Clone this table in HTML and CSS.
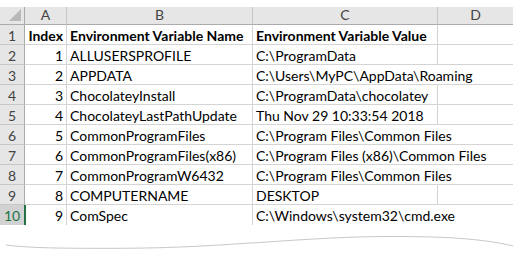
FILE: index.html
```html
<!DOCTYPE html>
<html>
<head>
<meta charset="utf-8">
<link rel="stylesheet" href="styles.css">
</head>
<body>
<div class="sheet">
  <div class="hdr corner"><span class="tri"></span></div>
  <div class="hdr col">A</div>
  <div class="hdr col">B</div>
  <div class="hdr col">C</div>
  <div class="hdr col last">D</div>

  <div class="rh">1</div>
  <div class="c num b">Index</div>
  <div class="c b">Environment Variable Name</div>
  <div class="c v b">Environment Variable Value</div>
  <div class="c d"></div>

  <div class="rh">2</div>
  <div class="c num">1</div>
  <div class="c">ALLUSERSPROFILE</div>
  <div class="c v">C:\ProgramData</div>
  <div class="c d"></div>

  <div class="rh">3</div>
  <div class="c num">2</div>
  <div class="c">APPDATA</div>
  <div class="c v over">C:\Users\MyPC\AppData\Roaming</div>
  <div class="c d"></div>

  <div class="rh">4</div>
  <div class="c num">3</div>
  <div class="c">ChocolateyInstall</div>
  <div class="c v">C:\ProgramData\chocolatey</div>
  <div class="c d"></div>

  <div class="rh">5</div>
  <div class="c num">4</div>
  <div class="c">ChocolateyLastPathUpdate</div>
  <div class="c v">Thu Nov 29 10:33:54 2018</div>
  <div class="c d"></div>

  <div class="rh">6</div>
  <div class="c num">5</div>
  <div class="c">CommonProgramFiles</div>
  <div class="c v over">C:\Program Files\Common Files</div>
  <div class="c d"></div>

  <div class="rh">7</div>
  <div class="c num">6</div>
  <div class="c">CommonProgramFiles(x86)</div>
  <div class="c v over">C:\Program Files (x86)\Common Files</div>
  <div class="c d"></div>

  <div class="rh">8</div>
  <div class="c num">7</div>
  <div class="c">CommonProgramW6432</div>
  <div class="c v over">C:\Program Files\Common Files</div>
  <div class="c d"></div>

  <div class="rh">9</div>
  <div class="c num">8</div>
  <div class="c">COMPUTERNAME</div>
  <div class="c v">DESKTOP</div>
  <div class="c d"></div>

  <div class="rh sel lastrow">10</div>
  <div class="c num lastrow">9</div>
  <div class="c lastrow">ComSpec</div>
  <div class="c v over lastrow">C:\Windows\system32\cmd.exe</div>
  <div class="c d lastrow"></div>
</div>
<svg class="tear" width="513" height="33" viewBox="0 0 513 33">
  <path d="M6 20 C 30 23, 60 23.5, 120 23.3 C 190 23, 230 19, 260 17.5 C 310 14, 350 11.5, 390 11.5 C 440 11.5, 480 13, 513 21" fill="none" stroke="#c8c8c8" stroke-width="1"/>
</svg>
</body>
</html>
```
FILE: styles.css
```css
html, body {
  margin: 0;
  padding: 0;
  background: #ffffff;
}
body {
  width: 513px;
  height: 258px;
  overflow: hidden;
  font-family: Lato, "Liberation Sans", sans-serif;
  font-size: 14px;
  color: #000;
}
.sheet {
  margin-top: 7px;
  display: grid;
  grid-template-columns: 25px 42px 186px 185px 75px;
  grid-template-rows: 18px repeat(10, 20px);
}
.hdr {
  background: #e6e6e6;
  border-right: 1px solid #c6c6c6;
  border-bottom: 1px solid #ababab;
  color: #444;
  text-align: center;
  line-height: 15px;
  box-sizing: border-box;
}
.hdr.last { border-right: none; }
.corner {
  position: relative;
  border-right-color: #ababab;
}
.tri {
  position: absolute;
  right: 3px;
  bottom: 3px;
  width: 0;
  height: 0;
  border-left: 12px solid transparent;
  border-bottom: 12px solid #b8b8b8;
}
.rh {
  background: #e6e6e6;
  border-right: 1px solid #ababab;
  border-bottom: 1px solid #c6c6c6;
  color: #444;
  text-align: center;
  padding-top: 2px;
  line-height: 17px;
  box-sizing: border-box;
}
.rh.sel {
  background: #d2d2d2;
  color: #217346;
  border-right: 2px solid #217346;
  margin-right: -1px;
  position: relative;
}
.c {
  border-right: 1px solid #d4d4d4;
  border-bottom: 1px solid #d4d4d4;
  box-sizing: border-box;
  padding: 2px 3px 0 3px;
  line-height: 17px;
  white-space: nowrap;
}
.c.lastrow, .rh.lastrow { border-bottom: none; }
.num { text-align: right; padding-right: 3px; }
.b { font-weight: bold; }
.v.over { border-right-color: transparent; }
.d { border-right: none; }
.tear { display: block; }
```
